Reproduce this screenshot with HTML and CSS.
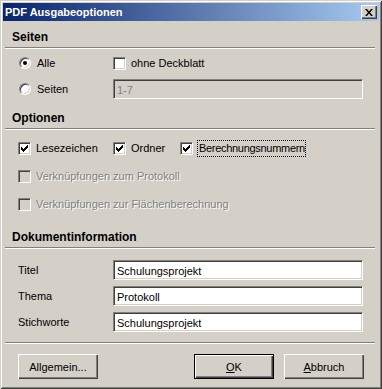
FILE: index.html
```html
<!DOCTYPE html>
<html lang="de">
<head>
    <meta charset="UTF-8">
    <title>PDF Ausgabeoptionen</title>
    <link rel="stylesheet" href="styles.css">
</head>
<body>
<div class="window">
    <div class="titlebar">
        <span class="title">PDF Ausgabeoptionen</span>
        <span class="close">
            <svg width="8" height="7" viewBox="0 0 8 7"><path d="M0 0h2l2 2.5L6 0h2L5 3.5 8 7H6L4 4.5 2 7H0l3-3.5z" fill="#000"/></svg>
        </span>
    </div>

    <div class="content">
        <div class="section-head">Seiten</div>
        <div class="rule"></div>
        <div class="group group-pages">
            <div class="row grid">
                <label class="opt"><span class="radio checked"></span>Alle</label>
                <label class="opt"><span class="check"></span>ohne Deckblatt</label>
            </div>
            <div class="row grid">
                <label class="opt"><span class="radio"></span>Seiten</label>
                <div class="field disabled">1-7</div>
            </div>
        </div>

        <div class="section-head">Optionen</div>
        <div class="rule"></div>
        <div class="group group-options">
            <div class="row options-row">
                <label class="opt"><span class="check checked"></span>Lesezeichen</label>
                <label class="opt"><span class="check checked"></span>Ordner</label>
                <label class="opt"><span class="check checked"></span><span class="focus">Berechnungsnummern</span></label>
            </div>
            <div class="row">
                <label class="opt off"><span class="check"></span>Verknüpfungen zum Protokoll</label>
            </div>
            <div class="row">
                <label class="opt off"><span class="check"></span>Verknüpfungen zur Flächenberechnung</label>
            </div>
        </div>

        <div class="section-head">Dokumentinformation</div>
        <div class="rule"></div>
        <div class="group group-info">
            <div class="row grid">
                <span class="label">Titel</span>
                <div class="field">Schulungsprojekt</div>
            </div>
            <div class="row grid">
                <span class="label">Thema</span>
                <div class="field">Protokoll</div>
            </div>
            <div class="row grid">
                <span class="label">Stichworte</span>
                <div class="field">Schulungsprojekt</div>
            </div>
        </div>

        <div class="rule"></div>
        <div class="buttons">
            <button class="btn">Allgemein...</button>
            <button class="btn default"><u>O</u>K</button>
            <button class="btn"><u>A</u>bbruch</button>
        </div>
    </div>
</div>
</body>
</html>
```

FILE: styles.css
```css
body {
    margin: 0;
    font-family: "Liberation Sans", Arial, sans-serif;
    font-size: 11px;
    color: #000;
    background: #d4d0c8;
}

.window {
    width: 382px;
    height: 389px;
    box-sizing: border-box;
    padding: 3px;
    background: #d4d0c8;
    box-shadow: inset 1px 1px 0 #d4d0c8, inset -1px -1px 0 #404040,
                inset 2px 2px 0 #fff, inset -2px -2px 0 #808080;
    display: flex;
    flex-direction: column;
}

.titlebar {
    height: 18px;
    display: flex;
    align-items: center;
    padding: 0 2px;
    background: linear-gradient(to right, #0a246a, #a6caf0);
    color: #fff;
    font-weight: bold;
    font-size: 11px;
}

.close {
    margin-left: auto;
    width: 16px;
    height: 14px;
    box-sizing: border-box;
    display: flex;
    align-items: center;
    justify-content: center;
    background: #d4d0c8;
    box-shadow: inset 1px 1px 0 #fff, inset -1px -1px 0 #404040, inset -2px -2px 0 #808080;
}

.content {
    padding-top: 8px;
}

.section-head {
    margin-left: 9px;
    height: 16px;
    line-height: 16px;
    font-size: 12px;
    font-weight: bold;
    margin-bottom: 2px;
}

.rule {
    height: 0;
    margin: 0 4px 0 2px;
    border-top: 1px solid #808080;
    border-bottom: 1px solid #fff;
}

.group {
    display: flex;
    flex-direction: column;
    padding-left: 15px;
    margin-right: 16px;
}

.group-pages {
    padding-top: 4px;
    gap: 6px;
    margin-bottom: 11px;
}

.group-options {
    padding-top: 8px;
    gap: 8px;
    margin-bottom: 15px;
}

.group-info {
    padding-top: 11px;
    gap: 6px;
    margin-bottom: 10px;
}

.row {
    height: 20px;
    display: flex;
    align-items: center;
}

.grid {
    display: grid;
    grid-template-columns: 95px 1fr;
    align-items: center;
}

.options-row {
    display: grid;
    grid-template-columns: 95px 67px auto;
}

.opt {
    display: flex;
    align-items: center;
    gap: 5px;
    white-space: nowrap;
}

.opt.off {
    color: #808080;
    text-shadow: 1px 1px 0 #fff;
}

.radio {
    position: relative;
    width: 12px;
    height: 12px;
    box-sizing: border-box;
    margin: 0 1px 0 1px;
    border-radius: 50%;
    border: 1px solid;
    border-color: #808080 #fff #fff #808080;
    background: #fff;
    box-shadow: inset 1px 1px 0 #404040, inset -1px -1px 0 #d4d0c8;
}

.radio.checked::after {
    content: "";
    position: absolute;
    left: 3px;
    top: 3px;
    width: 4px;
    height: 4px;
    border-radius: 50%;
    background: #000;
}

.check {
    position: relative;
    width: 13px;
    height: 13px;
    box-sizing: border-box;
    flex-shrink: 0;
    border: 1px solid;
    border-color: #808080 #fff #fff #808080;
    background: #fff;
    box-shadow: inset 1px 1px 0 #404040, inset -1px -1px 0 #d4d0c8;
}

.opt.off .check {
    background: #d4d0c8;
}

.check.checked::after {
    content: "";
    position: absolute;
    left: 2px;
    top: 2px;
    width: 7px;
    height: 7px;
    background: url("data:image/svg+xml,%3Csvg xmlns='http://www.w3.org/2000/svg' width='7' height='7'%3E%3Cpath d='M0 2h1v1h1v1h1V3h1V2h1V1h1V0h1v3H6v1H5v1H4v1H3v1H2V6H1V5H0z' fill='%23000'/%3E%3C/svg%3E");
}

.focus {
    display: block;
    width: 106px;
    margin-left: -1px;
    padding: 1px 0 1px 1px;
    line-height: 13px;
    letter-spacing: -0.3px;
    border: 1px dotted #000;
}

.field {
    height: 20px;
    box-sizing: border-box;
    padding: 1px 3px 0;
    line-height: 18px;
    background: #fff;
    border: 1px solid;
    border-color: #808080 #fff #fff #808080;
    box-shadow: inset 1px 1px 0 #404040, inset -1px -1px 0 #d4d0c8;
}

.field.disabled {
    background: #d4d0c8;
    color: #808080;
}

.buttons {
    display: flex;
    padding: 10px 15px 0 15px;
    gap: 10px;
}

.btn {
    width: 80px;
    height: 25px;
    box-sizing: border-box;
    font: 11px "Liberation Sans", Arial, sans-serif;
    color: #000;
    background: #d4d0c8;
    border: 0;
    padding: 0;
    box-shadow: inset 1px 1px 0 #fff, inset -1px -1px 0 #404040, inset -2px -2px 0 #808080;
}

.btn:first-child {
    margin-right: auto;
}

.btn.default {
    border: 1px solid #000;
}
```
